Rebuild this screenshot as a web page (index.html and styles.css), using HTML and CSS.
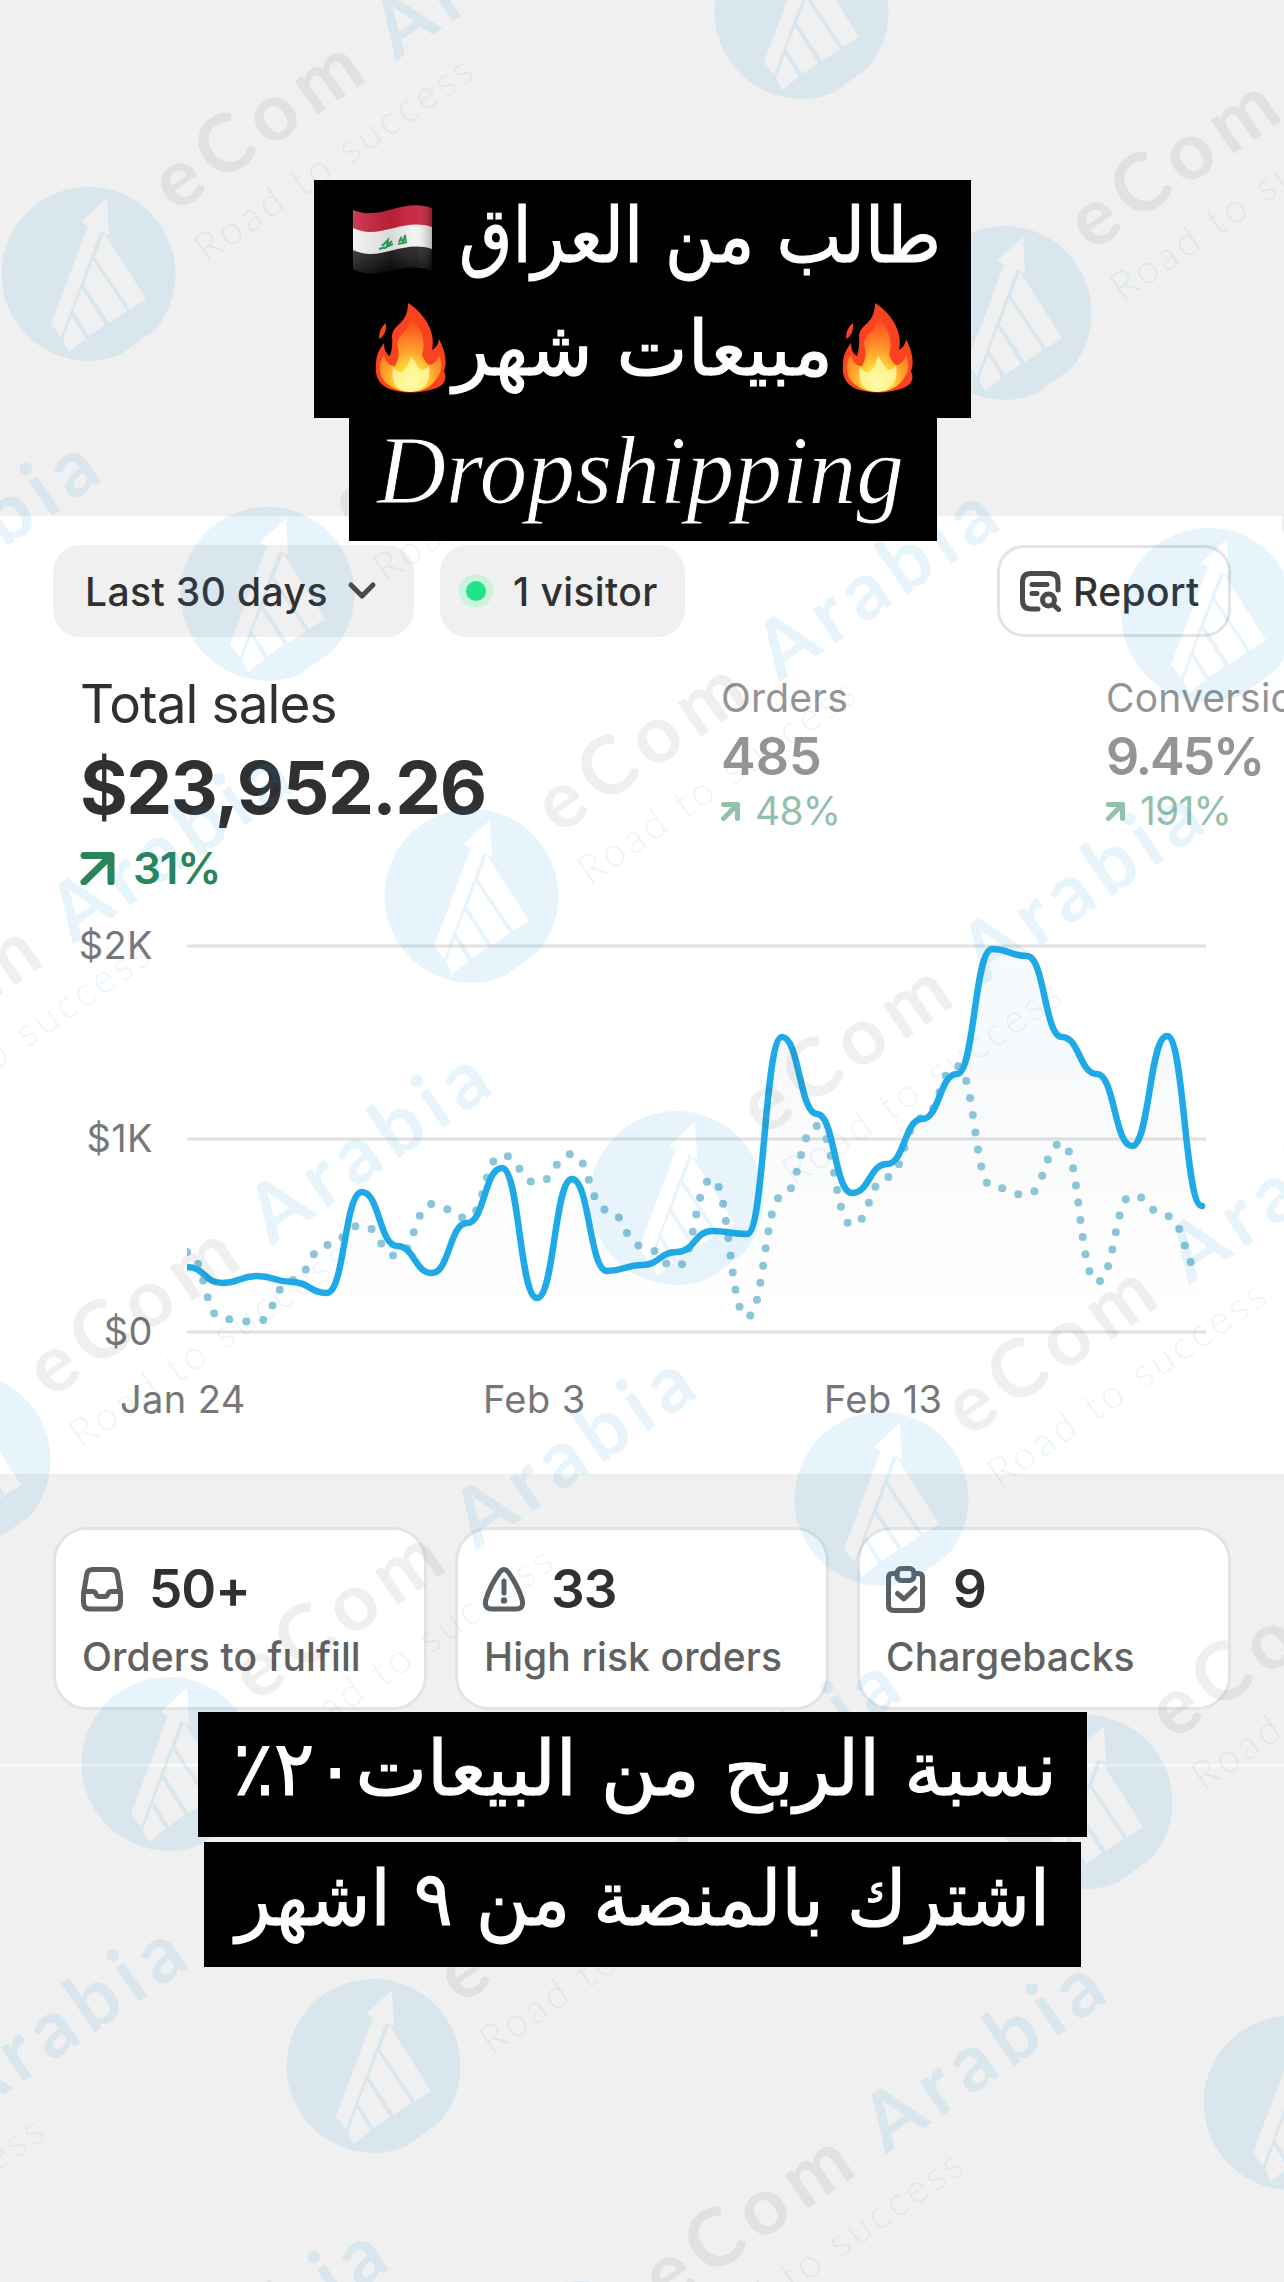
FILE: index.html
```html
<!DOCTYPE html>
<html lang="en">
  <head>
    <meta charset="UTF-8" />
    <meta name="viewport" content="width=device-width, initial-scale=1.0" />
    <title>Total sales</title>
    <link rel="stylesheet" href="styles.css">
  </head>
  <body>
    <div class="story">
      <main class="panel">
        <div class="toolbar">
          <div class="pill period">
            <span class="period-text">Last 30 days</span>
            <svg class="chevron" width="30" height="20" viewBox="0 0 30 20"><path d="M4 4l11 11L26 4" /></svg>
          </div>
          <div class="pill visitors">
            <span class="dot"></span>
            <span class="visitor-text">1 visitor</span>
          </div>
          <div class="pill report">
            <svg class="icon report-icon" width="41" height="41" viewBox="0 0 41 41">
              <path d="M38 19V11Q38 2.500 29.500 2.500H11Q2.500 2.500 2.500 11V29Q2.500 38 11 38H18" />
              <path d="M12 13.500H27M12 22.500H17" />
              <circle cx="28.500" cy="29" r="6" />
              <path d="M33 33.500L38.500 38.500" />
            </svg>
            <span class="report-text">Report</span>
          </div>
        </div>

        <div class="metrics">
          <div class="metric main">
            <div class="name">Total sales</div>
            <div class="value">$23,952.26</div>
            <div class="trend">
              <svg width="35" height="33" viewBox="0 0 35 33"><path d="M4 3.500H31V30M31 3.500L4 30" /></svg>
              <span>31%</span>
            </div>
          </div>
          <div class="metric">
            <div class="name">Orders</div>
            <div class="value">485</div>
            <div class="trend">
              <svg width="19" height="19" viewBox="0 0 19 19"><path d="M2.500 2.500H16.500V16.500M16.500 2.500L2.500 16.500" /></svg>
              <span>48%</span>
            </div>
          </div>
          <div class="metric">
            <div class="name">Conversion</div>
            <div class="value rate">9.45%</div>
            <div class="trend">
              <svg width="19" height="19" viewBox="0 0 19 19"><path d="M2.500 2.500H16.500V16.500M16.500 2.500L2.500 16.500" /></svg>
              <span>191%</span>
            </div>
          </div>
        </div>

        <div class="chart">
          <div class="y-axis">
            <span>$2K</span>
            <span>$1K</span>
            <span>$0</span>
          </div>
          <svg class="plot" width="1026" height="400" viewBox="0 -6 1026 400">
            <defs>
              <linearGradient id="area" x1="0" y1="0" x2="0" y2="1">
                <stop offset="0" stop-color="#1fa9e6" stop-opacity="0.05" />
                <stop offset="0.4" stop-color="#2c5878" stop-opacity="0.035" />
                <stop offset="1" stop-color="#777" stop-opacity="0" />
              </linearGradient>
            </defs>
            <path class="grid" d="M0 0H1019M0 193H1019M0 386H1019" />
            <path id="fill" fill="url(#area)" />
            <path id="previous" class="previous" />
            <path id="current" class="current" />
          </svg>
          <div class="x-axis">
            <span>Jan 24</span>
            <span>Feb 3</span>
            <span>Feb 13</span>
          </div>
        </div>
      </main>

      <section class="cards">
        <div class="card">
          <div class="count">
            <svg class="icon" width="44" height="46" viewBox="0 0 44 46">
              <path d="M13 3.500H31Q36.500 3.500 37.300 8.500L40.500 28V36Q40.500 43 34 43H10Q3.500 43 3.500 36V28L6.700 8.500Q7.500 3.500 13 3.500Z" />
              <path d="M4 25.500H13Q15 25.500 16 28Q17 30.500 19 30.500H25Q27 30.500 28 28Q29 25.500 31 25.500H40" />
            </svg>
            <b>50+</b>
          </div>
          <div class="label">Orders to fulfill</div>
        </div>
        <div class="card">
          <div class="count">
            <svg class="icon" width="44" height="46" viewBox="0 0 44 46">
              <path d="M17.500 6.500Q22 0.500 26.500 6.500Q36 20 40 33Q42.500 43 34 43H10Q1.500 43 4 33Q8 20 17.500 6.500Z" />
              <path d="M22 15V27" />
              <circle class="bang" cx="22" cy="34.500" r="3.200" />
            </svg>
            <b>33</b>
          </div>
          <div class="label">High risk orders</div>
        </div>
        <div class="card">
          <div class="count">
            <svg class="icon" width="44" height="48" viewBox="0 0 44 48">
              <path d="M13 8.500H8.500Q4.500 8.500 4.500 13V40Q4.500 45.500 10 45.500H33Q38.500 45.500 38.500 40V13Q38.500 8.500 34.500 8.500H30" />
              <rect x="13" y="3.500" width="17" height="12" rx="4.500" />
              <path d="M13.500 28.500L20 34L31 23.500" />
            </svg>
            <b>9</b>
          </div>
          <div class="label">Chargebacks</div>
        </div>
      </section>
      <div class="divider"></div>

      <!-- logo watermark, repeated over the whole story -->
      <svg class="watermark" width="1284" height="2282" viewBox="0 0 1284 2282">
        <defs>
          <g id="mark">
            <path
              class="blue"
              fill-rule="evenodd"
              d="M67 56A87 87 0 1 0 32 81Z
                M19 -76L21 -39L12.500 -43L-27 63L-37 50L0 -48L-7 -52Z
                M16 -41L58 25L42 35L7 -17Z
                M5 -14L39 37L21 49L-4 11Z
                M-6 15L17 51L1 62L-15 37Z
                M-16 42L-2.500 65L-19 78L-25 66Z"
            />
            <g transform="rotate(-34.700)">
              <text class="brand" x="106" y="0" textLength="236" lengthAdjust="spacing">eCom</text>
              <text class="brand blue" x="375" y="0" textLength="273" lengthAdjust="spacing">Arabia</text>
              <text class="tag blue" x="103" y="59" textLength="328" lengthAdjust="spacing">Road to success</text>
            </g>
          </g>
        </defs>
        <use href="#mark" x="88" y="274" />
        <use href="#mark" x="801" y="12" />
        <use href="#mark" x="1004" y="313" />
        <use href="#mark" x="1208" y="615" />
        <use href="#mark" x="267" y="594" />
        <use href="#mark" x="471" y="896" />
        <use href="#mark" x="676" y="1198" />
        <use href="#mark" x="881" y="1499" />
        <use href="#mark" x="1085" y="1802" />
        <use href="#mark" x="1290" y="2103" />
        <use href="#mark" x="-428" y="848" />
        <use href="#mark" x="-235" y="1158" />
        <use href="#mark" x="-37" y="1460" />
        <use href="#mark" x="168" y="1764" />
        <use href="#mark" x="373" y="2066" />
        <use href="#mark" x="578" y="2368" />
        <use href="#mark" x="-341" y="2334" />
        <use href="#mark" x="-140" y="2636" />
      </svg>

      <div class="stickers top">
        <svg class="sticker" width="657" height="238" viewBox="0 0 657 238">
          <defs>
            <radialGradient id="flame" cx="0.5" cy="0.88" r="0.85">
              <stop offset="0" stop-color="#fffbb0" />
              <stop offset="0.22" stop-color="#ffe23d" />
              <stop offset="0.5" stop-color="#ff9f2b" />
              <stop offset="0.85" stop-color="#ff5a22" />
              <stop offset="1" stop-color="#f4421d" />
            </radialGradient>
            <linearGradient id="flag-shade">
              <stop offset="0" stop-color="#fff" stop-opacity="0.12" />
              <stop offset="0.5" stop-color="#000" stop-opacity="0.1" />
              <stop offset="0.8" stop-color="#fff" stop-opacity="0.05" />
              <stop offset="1" stop-color="#000" stop-opacity="0.25" />
            </linearGradient>
            <linearGradient id="flag-black" x1="0" y1="0" x2="0" y2="1">
              <stop offset="0.2" stop-color="#262626" />
              <stop offset="1" stop-color="#060606" />
            </linearGradient>
            <g id="fire">
              <path fill="#f9431f" d="M33 0C52 12 61 32 57 47Q63 44 64 36Q74 56 69 68Q76 84 50 88Q36 91 22 88Q-2 84 1 60Q1 50 9 40Q9 50 15 53Q18 44 17 33C18 20 33 22 33 0ZM11 20Q4 25 4 36Q12 32 11 20Z" />
              <path fill="url(#flame)" d="M34 12C45 23 52 36 47 52Q51 62 56 62Q63 58 64 52Q70 65 62 75Q54 88 36 89Q14 88 6 73Q2 61 9 52Q12 64 20 63Q26 54 22 40C26 26 36 30 34 12Z" />
              <path fill="#fff9a6" opacity="0.8" d="M36 53Q43 64 46 67Q51 66 54 63Q58 86 35 89Q14 87 18 64Q24 71 27 69Q34 64 36 53Z" />
            </g>
          </defs>
          <g transform="translate(39 25)">
            <path fill="#c8233c" d="M0 5C27 17 49 -8 79 3V26C49 16 27 39 0 26Z" />
            <path fill="#f2f2f2" d="M0 23C27 36 49 12 79 22V46C49 36 27 60 0 47Z" />
            <path fill="url(#flag-black)" d="M0 45C27 58 49 34 79 44V66C49 54 27 78 0 64Z" />
            <path class="script" d="M26 44Q33 43 40 39M29 41L35 35L34 41L39 36M45 39Q50 38 54 37M46 37L48 33L50 37L52 30L53 37" />
            <path fill="url(#flag-shade)" d="M0 5C27 17 49 -8 79 3V66C49 54 27 78 0 64Z" />
          </g>
          <text class="arabic" x="386" y="82" textLength="482" lengthAdjust="spacingAndGlyphs">طالب من العراق</text>
          <use href="#fire" x="61" y="123" />
          <text class="arabic" x="329" y="195" textLength="380" lengthAdjust="spacingAndGlyphs">مبيعات شهر</text>
          <use href="#fire" x="528" y="123" />
        </svg>
        <svg class="sticker" width="588" height="123" viewBox="0 0 588 123">
          <text class="latin" x="28" y="85" textLength="527" lengthAdjust="spacingAndGlyphs">Dropshipping</text>
        </svg>
      </div>

      <div class="stickers bottom">
        <svg class="sticker" width="889" height="125" viewBox="0 0 889 125">
          <text class="arabic" x="447" y="83" textLength="824" lengthAdjust="spacingAndGlyphs">نسبة الربح من البيعات٢٠٪</text>
        </svg>
        <svg class="sticker" width="877" height="125" viewBox="0 0 877 125">
          <text class="arabic" x="439" y="83" textLength="814" lengthAdjust="spacingAndGlyphs">اشترك بالمنصة من ٩ اشهر</text>
        </svg>
      </div>
    </div>

    <script src="chart.js"></script>
  </body>
</html>
```
FILE: styles.css
```css
body {
  margin: 0;
  background-color: #f0f0f0;
  font-family: Inter, "Liberation Sans", sans-serif;
  color: #303030;
}
.story {
  position: relative;
  width: 1284px;
  height: 2282px;
  overflow: hidden;
}
.panel {
  box-sizing: border-box;
  height: 958px;
  margin-top: 516px;
  padding-top: 29px;
  background-color: #fff;
}
.story::before {
  content: "";
  display: table;
}

/* filter row */
.toolbar {
  display: flex;
  gap: 26px;
  padding: 0 53px;
}
.pill {
  box-sizing: border-box;
  display: flex;
  align-items: center;
  height: 92px;
  border-radius: 27px;
  background-color: #f0f0f0;
  font-size: 39px;
  font-weight: 500;
  letter-spacing: 0.4px;
  white-space: nowrap;
}
.period {
  width: 361px;
  padding-left: 32px;
  gap: 19px;
}
.chevron path {
  fill: none;
  stroke: #4a4a4a;
  stroke-width: 5;
  stroke-linecap: round;
  stroke-linejoin: round;
}
.visitors {
  width: 245px;
  padding-left: 19px;
  gap: 20px;
}
.dot {
  width: 20px;
  height: 20px;
  border: 7px solid #cdf3dd;
  border-radius: 50%;
  background-color: #1fe586;
}
.report {
  width: 234px;
  margin-left: auto;
  padding-left: 20px;
  gap: 12px;
  border: 3px solid #e3e3e3;
  background-color: #fff;
}
.icon {
  fill: none;
  stroke: #5c5f62;
  stroke-width: 5;
  stroke-linecap: round;
  stroke-linejoin: round;
}
.report-icon {
  stroke: #4a4a4a;
}
.icon .bang {
  fill: #5c5f62;
  stroke: none;
}

/* sales numbers */
.metrics {
  display: grid;
  grid-template-columns: 641px 385px 300px;
  height: 263px;
  padding-left: 80px;
  overflow: hidden;
}
.metric {
  padding-top: 36px;
  color: #949494;
  white-space: nowrap;
}
.metric .name {
  font-size: 39px;
  line-height: 50px;
  letter-spacing: 0.2px;
}
.metric .value {
  font-size: 52px;
  font-weight: 600;
  line-height: 68px;
}
.metric .rate {
  letter-spacing: -2.2px;
}
.metric .trend {
  display: flex;
  align-items: center;
  gap: 15px;
  margin-top: -4px;
  color: #93c0aa;
  font-size: 39px;
  line-height: 48px;
  letter-spacing: -0.8px;
}
.metric .trend path {
  fill: none;
  stroke: currentColor;
  stroke-width: 5;
  stroke-linejoin: round;
  stroke-linecap: round;
}
.metric.main {
  color: #303030;
}
.metric.main .name {
  font-size: 53px;
  line-height: 62px;
  letter-spacing: -0.9px;
}
.metric.main .value {
  font-size: 73px;
  font-weight: 700;
  line-height: 106px;
  letter-spacing: -1.5px;
}
.metric.main .trend {
  gap: 18px;
  margin-top: 0;
  color: #29845a;
  font-size: 44px;
  font-weight: 600;
  line-height: 54px;
  letter-spacing: -1.2px;
}
.metric.main .trend path {
  stroke-width: 7;
}

/* chart */
.chart {
  display: grid;
  grid-template-columns: 187px 1fr;
  color: #77777b;
  font-size: 38px;
  letter-spacing: 0.4px;
}
.y-axis {
  display: flex;
  flex-direction: column;
  justify-content: space-between;
  height: 434px;
  margin-top: 21px;
  padding-right: 34px;
  line-height: 48px;
  text-align: right;
}
.plot {
  margin-top: 40px;
}
.plot path {
  stroke-width: 6.5;
}
.plot .grid {
  stroke: #e1e1e2;
  stroke-width: 3;
}
#fill {
  stroke: none;
}
.previous {
  fill: none;
  stroke: #8bc5da;
  stroke-linecap: round;
  stroke-dasharray: 0 17.3;
}
.plot .previous {
  stroke-width: 8;
}
.current {
  fill: none;
  stroke: #1fa9e6;
  stroke-linecap: round;
  stroke-linejoin: round;
}
.x-axis {
  grid-column: 1 / 3;
  display: grid;
  grid-template-columns: 363px 341px 300px;
  padding: 20px 0 0 120px;
  line-height: 48px;
}

/* action cards */
.cards {
  display: grid;
  grid-template-columns: repeat(3, 374px);
  gap: 28px;
  padding: 53px 53px 0;
}
.card {
  box-sizing: border-box;
  height: 183px;
  padding: 29px 24px 0;
  border: 3px solid #e3e3e3;
  border-radius: 34px;
  background-color: #fff;
}
.count {
  display: flex;
  align-items: center;
  gap: 25px;
  height: 60px;
}
.count b {
  font-size: 53px;
  font-weight: 600;
  letter-spacing: -1px;
}
.label {
  margin-top: 14px;
  padding-left: 2px;
  color: #616161;
  font-size: 39px;
  font-weight: 500;
  line-height: 48px;
  letter-spacing: 0.1px;
  white-space: nowrap;
}
.divider {
  height: 3px;
  margin-top: 54px;
  background-color: #fafafa;
}

/* watermark */
.watermark {
  position: absolute;
  top: 0;
  left: 0;
}
.watermark text {
  font-family: Lato, sans-serif;
  fill: #1c211c;
  fill-opacity: 0.07;
}
.watermark .brand {
  font-size: 80px;
  font-weight: 700;
}
.watermark .tag {
  font-size: 40px;
  font-weight: 300;
}
.watermark .blue {
  fill: #1991d7;
  fill-opacity: 0.1;
}

/* black captions */
.stickers {
  position: absolute;
  left: 0;
  width: 1285px;
  display: flex;
  flex-direction: column;
  align-items: center;
}
.top {
  top: 180px;
}
.bottom {
  top: 1712px;
  gap: 5px;
}
.sticker {
  display: block;
  overflow: visible;
  background-color: #000;
}
.arabic {
  direction: rtl;
  text-anchor: middle;
  font-family: "DejaVu Sans", sans-serif;
  font-size: 76px;
  fill: #fff;
  stroke: #fff;
  stroke-width: 1.2;
}
.latin {
  font-family: "Liberation Serif", serif;
  font-size: 98px;
  font-style: italic;
  fill: #fff;
  stroke: #000;
  stroke-width: 1;
}
.script {
  fill: none;
  stroke: #2ba05c;
  stroke-width: 2;
}
```
FILE: chart.js
```js
// heights above the $0 line, one per day
const current = [
  65, 49, 56, 50, 39, 140, 86, 59, 109, 164, 34, 153, 61, 67, 80, 101, 98, 295,
  218, 139, 168, 213, 258, 383, 376, 295, 258, 186, 296, 126,
];
const previous = [
  80, 13, 10, 52, 87, 107, 76, 128, 114, 177, 149, 178, 122, 86, 65, 153, 15,
  136, 206, 107, 155, 214, 266, 145, 137, 189, 50, 137, 116, 59,
];
const step = 35;
const base = 386;

function line(values) {
  let d = `M0 ${base - values[0]}`;
  for (let i = 1; i < values.length; i++) {
    const mid = (i - 0.5) * step;
    d += `C${mid} ${base - values[i - 1]} ${mid} ${base - values[i]} ${i * step} ${base - values[i]}`;
  }
  return d;
}

document.getElementById("current").setAttribute("d", line(current));
document.getElementById("previous").setAttribute("d", line(previous));
document
  .getElementById("fill")
  .setAttribute("d", `${line(current)}V${base}H0Z`);
```
